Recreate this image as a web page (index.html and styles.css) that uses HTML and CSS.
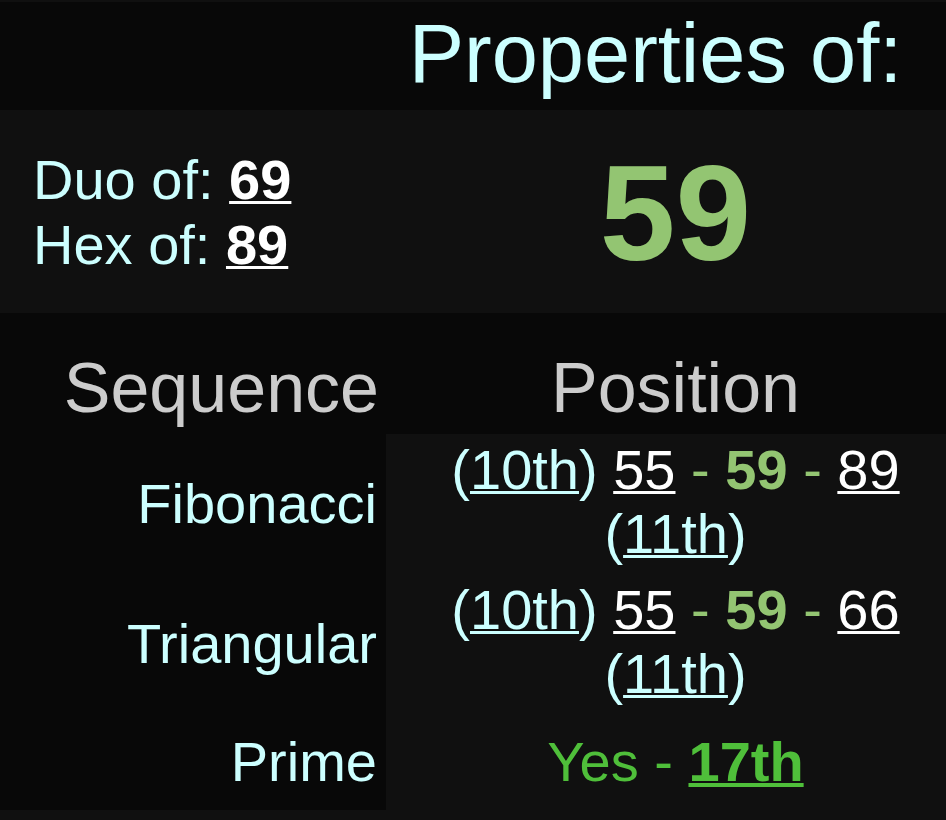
FILE: index.html
```html
<!DOCTYPE html>
<html lang="en">
<head>
<meta charset="utf-8">
<title>Properties of 59</title>
<link rel="stylesheet" href="styles.css">
</head>
<body>
<div class="page">
  <div class="cell dark h-title"></div>
  <div class="cell dark h-title title">Properties of:</div>

  <div class="cell light h-number rel">
    <div>Duo of: <a class="num bold" href="#">69</a></div>
    <div>Hex of: <a class="num bold" href="#">89</a></div>
  </div>
  <div class="cell light h-number big">59</div>

  <div class="cell dark h-head head left">Sequence</div>
  <div class="cell dark h-head head right">Position</div>

  <div class="cell dark h-seq label">Fibonacci</div>
  <div class="cell light h-seq pos">
    <span class="cy">(<a class="cy" href="#">10th</a>)</span> <a class="num" href="#">55</a> <span class="dash">-</span> <b class="hl">59</b> <span class="dash">-</span> <a class="num" href="#">89</a> <span class="cy">(<a class="cy" href="#">11th</a>)</span>
  </div>

  <div class="cell dark h-seq label">Triangular</div>
  <div class="cell light h-seq pos">
    <span class="cy">(<a class="cy" href="#">10th</a>)</span> <a class="num" href="#">55</a> <span class="dash">-</span> <b class="hl">59</b> <span class="dash">-</span> <a class="num" href="#">66</a> <span class="cy">(<a class="cy" href="#">11th</a>)</span>
  </div>

  <div class="cell dark h-prime label">Prime</div>
  <div class="cell light h-prime prime"><div>Yes - <a class="prime-link" href="#">17th</a></div></div>
</div>
</body>
</html>
```

FILE: styles.css
```css
html, body {
  margin: 0;
  padding: 0;
}

body {
  background: #101010;
  font-family: "Liberation Sans", Arial, Helvetica, sans-serif;
  color: #ccffff;
  padding-top: 2px;
  overflow: hidden;
}

.page {
  display: grid;
  grid-template-columns: 386px 1fr;
  width: 946px;
}

.cell {
  box-sizing: border-box;
  display: flex;
  flex-direction: column;
}

.dark { background: #080808; }
.light { background: #101010; }

a { color: inherit; }

.h-title {
  height: 108px;
}

.title {
  font-size: 83px;
  line-height: 95px;
  padding-top: 4px;
  padding-right: 21px;
  text-align: center;
  color: #ccffff;
}

.h-number {
  height: 203px;
  justify-content: center;
}

.rel {
  font-size: 56px;
  line-height: 65px;
  padding-left: 33px;
  color: #ccffff;
}

.num {
  color: #ffffff;
  text-decoration: underline;
  text-decoration-thickness: 3px;
}

.bold { font-weight: bold; }

.big {
  font-size: 136px;
  font-weight: bold;
  color: #93c572;
  text-align: center;
  padding-left: 19px;
  padding-top: 2px;
}

.h-head {
  height: 121px;
  padding-top: 35px;
}

.head {
  font-size: 70px;
  line-height: 81px;
  color: #cccccc;
}

.head.left {
  text-align: right;
  padding-right: 7px;
}

.head.right {
  text-align: center;
  padding-left: 19px;
}

.h-seq {
  height: 140px;
}

.h-prime {
  height: 96px;
  justify-content: center;
}

.label {
  font-size: 56px;
  line-height: 64px;
  text-align: right;
  padding-right: 9px;
  justify-content: center;
  color: #ccffff;
}

.pos {
  display: block;
  font-size: 56px;
  line-height: 64px;
  text-align: center;
  padding-left: 19px;
  padding-top: 4px;
}

.cy {
  color: #ccffff;
}

a.cy {
  text-decoration: underline;
  text-decoration-thickness: 3px;
}

.dash {
  color: #93c572;
}

.hl {
  color: #93c572;
  font-weight: bold;
}

.prime {
  font-size: 56px;
  line-height: 64px;
  text-align: center;
  padding-left: 19px;
  color: #4fbf3a;
}

.prime-link {
  color: #4fbf3a;
  font-weight: bold;
  text-decoration: underline;
  text-decoration-thickness: 4px;
}
```
